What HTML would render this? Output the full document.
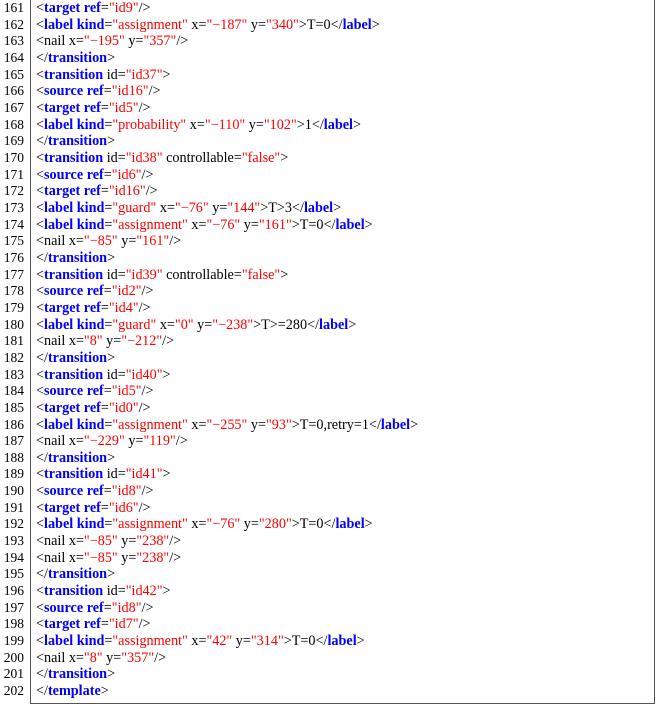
<!DOCTYPE html>
<html><head><meta charset="utf-8"><style>
html,body{margin:0;padding:0;background:#fff;}
body{width:661px;height:708px;position:relative;overflow:hidden;font-family:"Liberation Serif",serif;font-size:14.2px;color:#000;}
.box{position:absolute;left:30px;top:-2px;width:625px;height:706px;border:1px solid #555;border-top:none;box-sizing:border-box;}
.ln{position:absolute;left:0;width:24px;text-align:right;font-size:13.5px;}
.l{position:absolute;left:36px;white-space:pre;}
.ln,.l{line-height:16.66px;height:16.66px;}
b{color:#0000ff;font-weight:bold;}
i{color:#ff0000;font-style:normal;}
</style></head><body>
<div class="box"></div>
<div style="position:absolute;left:0;top:0;">
<div class="ln" style="top:0px">161</div><div class="l" style="top:0px">&lt;<b>target</b> <b>ref</b>=<i>"id9"</i>/&gt;</div>
<div class="ln" style="top:16.66px">162</div><div class="l" style="top:16.66px">&lt;<b>label</b> <b>kind</b>=<i>"assignment"</i> x=<i>"−187"</i> y=<i>"340"</i>&gt;T=0&lt;/<b>label</b>&gt;</div>
<div class="ln" style="top:33.32px">163</div><div class="l" style="top:33.32px">&lt;nail x=<i>"−195"</i> y=<i>"357"</i>/&gt;</div>
<div class="ln" style="top:49.98px">164</div><div class="l" style="top:49.98px">&lt;/<b>transition</b>&gt;</div>
<div class="ln" style="top:66.64px">165</div><div class="l" style="top:66.64px">&lt;<b>transition</b> id=<i>"id37"</i>&gt;</div>
<div class="ln" style="top:83.3px">166</div><div class="l" style="top:83.3px">&lt;<b>source</b> <b>ref</b>=<i>"id16"</i>/&gt;</div>
<div class="ln" style="top:99.96px">167</div><div class="l" style="top:99.96px">&lt;<b>target</b> <b>ref</b>=<i>"id5"</i>/&gt;</div>
<div class="ln" style="top:116.62px">168</div><div class="l" style="top:116.62px">&lt;<b>label</b> <b>kind</b>=<i>"probability"</i> x=<i>"−110"</i> y=<i>"102"</i>&gt;1&lt;/<b>label</b>&gt;</div>
<div class="ln" style="top:133.28px">169</div><div class="l" style="top:133.28px">&lt;/<b>transition</b>&gt;</div>
<div class="ln" style="top:149.94px">170</div><div class="l" style="top:149.94px">&lt;<b>transition</b> id=<i>"id38"</i> controllable=<i>"false"</i>&gt;</div>
<div class="ln" style="top:166.6px">171</div><div class="l" style="top:166.6px">&lt;<b>source</b> <b>ref</b>=<i>"id6"</i>/&gt;</div>
<div class="ln" style="top:183.26px">172</div><div class="l" style="top:183.26px">&lt;<b>target</b> <b>ref</b>=<i>"id16"</i>/&gt;</div>
<div class="ln" style="top:199.92px">173</div><div class="l" style="top:199.92px">&lt;<b>label</b> <b>kind</b>=<i>"guard"</i> x=<i>"−76"</i> y=<i>"144"</i>&gt;T&gt;3&lt;/<b>label</b>&gt;</div>
<div class="ln" style="top:216.58px">174</div><div class="l" style="top:216.58px">&lt;<b>label</b> <b>kind</b>=<i>"assignment"</i> x=<i>"−76"</i> y=<i>"161"</i>&gt;T=0&lt;/<b>label</b>&gt;</div>
<div class="ln" style="top:233.24px">175</div><div class="l" style="top:233.24px">&lt;nail x=<i>"−85"</i> y=<i>"161"</i>/&gt;</div>
<div class="ln" style="top:249.9px">176</div><div class="l" style="top:249.9px">&lt;/<b>transition</b>&gt;</div>
<div class="ln" style="top:266.56px">177</div><div class="l" style="top:266.56px">&lt;<b>transition</b> id=<i>"id39"</i> controllable=<i>"false"</i>&gt;</div>
<div class="ln" style="top:283.22px">178</div><div class="l" style="top:283.22px">&lt;<b>source</b> <b>ref</b>=<i>"id2"</i>/&gt;</div>
<div class="ln" style="top:299.88px">179</div><div class="l" style="top:299.88px">&lt;<b>target</b> <b>ref</b>=<i>"id4"</i>/&gt;</div>
<div class="ln" style="top:316.54px">180</div><div class="l" style="top:316.54px">&lt;<b>label</b> <b>kind</b>=<i>"guard"</i> x=<i>"0"</i> y=<i>"−238"</i>&gt;T&gt;=280&lt;/<b>label</b>&gt;</div>
<div class="ln" style="top:333.2px">181</div><div class="l" style="top:333.2px">&lt;nail x=<i>"8"</i> y=<i>"−212"</i>/&gt;</div>
<div class="ln" style="top:349.86px">182</div><div class="l" style="top:349.86px">&lt;/<b>transition</b>&gt;</div>
<div class="ln" style="top:366.52px">183</div><div class="l" style="top:366.52px">&lt;<b>transition</b> id=<i>"id40"</i>&gt;</div>
<div class="ln" style="top:383.18px">184</div><div class="l" style="top:383.18px">&lt;<b>source</b> <b>ref</b>=<i>"id5"</i>/&gt;</div>
<div class="ln" style="top:399.84px">185</div><div class="l" style="top:399.84px">&lt;<b>target</b> <b>ref</b>=<i>"id0"</i>/&gt;</div>
<div class="ln" style="top:416.5px">186</div><div class="l" style="top:416.5px">&lt;<b>label</b> <b>kind</b>=<i>"assignment"</i> x=<i>"−255"</i> y=<i>"93"</i>&gt;T=0,retry=1&lt;/<b>label</b>&gt;</div>
<div class="ln" style="top:433.16px">187</div><div class="l" style="top:433.16px">&lt;nail x=<i>"−229"</i> y=<i>"119"</i>/&gt;</div>
<div class="ln" style="top:449.82px">188</div><div class="l" style="top:449.82px">&lt;/<b>transition</b>&gt;</div>
<div class="ln" style="top:466.48px">189</div><div class="l" style="top:466.48px">&lt;<b>transition</b> id=<i>"id41"</i>&gt;</div>
<div class="ln" style="top:483.14px">190</div><div class="l" style="top:483.14px">&lt;<b>source</b> <b>ref</b>=<i>"id8"</i>/&gt;</div>
<div class="ln" style="top:499.8px">191</div><div class="l" style="top:499.8px">&lt;<b>target</b> <b>ref</b>=<i>"id6"</i>/&gt;</div>
<div class="ln" style="top:516.46px">192</div><div class="l" style="top:516.46px">&lt;<b>label</b> <b>kind</b>=<i>"assignment"</i> x=<i>"−76"</i> y=<i>"280"</i>&gt;T=0&lt;/<b>label</b>&gt;</div>
<div class="ln" style="top:533.12px">193</div><div class="l" style="top:533.12px">&lt;nail x=<i>"−85"</i> y=<i>"238"</i>/&gt;</div>
<div class="ln" style="top:549.78px">194</div><div class="l" style="top:549.78px">&lt;nail x=<i>"−85"</i> y=<i>"238"</i>/&gt;</div>
<div class="ln" style="top:566.44px">195</div><div class="l" style="top:566.44px">&lt;/<b>transition</b>&gt;</div>
<div class="ln" style="top:583.1px">196</div><div class="l" style="top:583.1px">&lt;<b>transition</b> id=<i>"id42"</i>&gt;</div>
<div class="ln" style="top:599.76px">197</div><div class="l" style="top:599.76px">&lt;<b>source</b> <b>ref</b>=<i>"id8"</i>/&gt;</div>
<div class="ln" style="top:616.42px">198</div><div class="l" style="top:616.42px">&lt;<b>target</b> <b>ref</b>=<i>"id7"</i>/&gt;</div>
<div class="ln" style="top:633.08px">199</div><div class="l" style="top:633.08px">&lt;<b>label</b> <b>kind</b>=<i>"assignment"</i> x=<i>"42"</i> y=<i>"314"</i>&gt;T=0&lt;/<b>label</b>&gt;</div>
<div class="ln" style="top:649.74px">200</div><div class="l" style="top:649.74px">&lt;nail x=<i>"8"</i> y=<i>"357"</i>/&gt;</div>
<div class="ln" style="top:666.4px">201</div><div class="l" style="top:666.4px">&lt;/<b>transition</b>&gt;</div>
<div class="ln" style="top:683.06px">202</div><div class="l" style="top:683.06px">&lt;/<b>template</b>&gt;</div>
</div>
</body></html>
